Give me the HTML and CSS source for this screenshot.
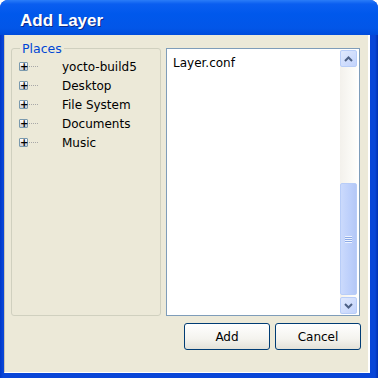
FILE: index.html
```html
<html>
  <head>
    <title>Add Layer</title>
    <link rel="stylesheet" href="styles.css">
  </head>
  <body>
    <div class="window">
      <div class="titlebar">Add Layer</div>
      <div class="frame">
        <div class="client">
          <div class="panes">
            <fieldset class="places">
              <legend>Places</legend>
              <ul class="tree">
                <li><span class="expander">+</span><span class="dots"></span><span class="label">yocto-build5</span></li>
                <li><span class="expander">+</span><span class="dots"></span><span class="label">Desktop</span></li>
                <li><span class="expander">+</span><span class="dots"></span><span class="label">File System</span></li>
                <li><span class="expander">+</span><span class="dots"></span><span class="label">Documents</span></li>
                <li><span class="expander">+</span><span class="dots"></span><span class="label">Music</span></li>
              </ul>
            </fieldset>

            <div class="listbox">
              <div class="items">
                <div class="item">Layer.conf</div>
              </div>
              <div class="scrollbar">
                <div class="sbtn">
                  <svg width="9" height="6" viewBox="0 0 9 6"><path d="M1 5 L4.5 1.5 L8 5" fill="none" stroke="#4d6185" stroke-width="2"/></svg>
                </div>
                <div class="track">
                  <div class="thumb"><span class="grip"></span></div>
                </div>
                <div class="sbtn">
                  <svg width="9" height="6" viewBox="0 0 9 6"><path d="M1 1 L4.5 4.5 L8 1" fill="none" stroke="#4d6185" stroke-width="2"/></svg>
                </div>
              </div>
            </div>
          </div>

          <div class="actions">
            <button>Add</button>
            <button>Cancel</button>
          </div>
        </div>
      </div>
    </div>
  </body>
</html>
```

FILE: styles.css
```css
body {
  margin: 0;
  background: #ffffff;
  font-family: "DejaVu Sans", Verdana, sans-serif;
  font-size: 12px;
}

.window {
  width: 378px;
  height: 378px;
  background: #0842d6;
  border-radius: 8px 8px 0 0;
  overflow: hidden;
  display: flex;
  flex-direction: column;
}

.titlebar {
  height: 35px;
  box-sizing: border-box;
  padding: 11px 0 0 20px;
  color: #fff;
  font-family: "Liberation Sans", Arial, sans-serif;
  font-size: 17px;
  font-weight: bold;
  text-shadow: 1px 1px 0 #0a2a8a;
  background: linear-gradient(#2a7cf8 0px, #0a5ef0 4px, #0058ec 14px, #0256e8 28px, #004cdc 35px);
}

.frame {
  flex: 1;
  display: flex;
  padding: 0 8px 5px 4px;
  background: linear-gradient(90deg, #0038c8, #0946d8 3px, #0846d8 calc(100% - 3px), #0030b0);
}

.client {
  flex: 1;
  background: #ece9d8;
  border-left: 1px solid #c8c4b4;
  border-right: 2px solid #ffffff;
  border-bottom: 1px solid #ffffff;
  padding: 6px 0 0 6px;
}

.panes {
  display: grid;
  grid-template-columns: 150px 194px;
  column-gap: 5px;
  height: 275px;
}

.places {
  margin: 0;
  padding: 1px 0 0 0;
  border: 1px solid #d0d0bf;
  border-radius: 3px;
  min-width: 0;
}

.places legend {
  color: #0046d5;
  font-size: 12.5px;
  padding: 0 2px;
  margin-left: 8px;
}

.tree {
  list-style: none;
  margin: 0;
  padding: 0 0 0 7px;
}

.tree li {
  display: flex;
  align-items: center;
  height: 19px;
}

.expander {
  width: 7px;
  height: 7px;
  border: 1px solid #7a99ad;
  border-radius: 1px;
  background: linear-gradient(#ffffff, #c8ccd6);
  color: #000;
  font-size: 10px;
  line-height: 7px;
  text-align: center;
  font-weight: bold;
}

.dots {
  width: 9px;
  margin-left: 1px;
  border-top: 1px dotted #a8a8a8;
}

.label {
  margin-left: 24px;
  color: #000;
}

.listbox {
  display: flex;
  background: #fff;
  border: 1px solid #7f9db9;
  height: 268px;
  box-sizing: border-box;
  align-self: start;
  margin-top: 7px;
}

.items {
  flex: 1;
  padding: 7px 6px;
}

.scrollbar {
  width: 17px;
  margin: 1px 2px 1px 0;
  display: flex;
  flex-direction: column;
  background: linear-gradient(90deg, #f3f1ec, #fefefb);
}

.sbtn {
  height: 17px;
  box-sizing: border-box;
  border: 1px solid #b8cdf8;
  border-radius: 2px;
  background: linear-gradient(135deg, #e0e9fd, #c2d3fc);
  display: flex;
  align-items: center;
  justify-content: center;
}

.track {
  flex: 1;
  display: flex;
  flex-direction: column;
  justify-content: flex-end;
  padding-bottom: 2px;
}

.thumb {
  height: 112px;
  box-sizing: border-box;
  border: 1px solid #b8cdf8;
  border-radius: 2px;
  background: linear-gradient(90deg, #cbdafc, #bccffb 60%, #b4c8f6);
  display: flex;
  align-items: center;
  justify-content: center;
}

.grip {
  width: 7px;
  height: 7px;
  background: repeating-linear-gradient(#eef3fe 0 1px, #8caae6 1px 2px);
}

.actions {
  display: flex;
  justify-content: flex-end;
  gap: 5px;
  padding: 0 7px 0 0;
  margin-top: 7px;
}

button {
  width: 86px;
  height: 27px;
  border: 1px solid #003c74;
  border-radius: 3px;
  background: linear-gradient(#ffffff, #f4f3ee 60%, #e3e1d8);
  font-family: "DejaVu Sans", Verdana, sans-serif;
  font-size: 12px;
  color: #000;
  padding: 0;
}
```
